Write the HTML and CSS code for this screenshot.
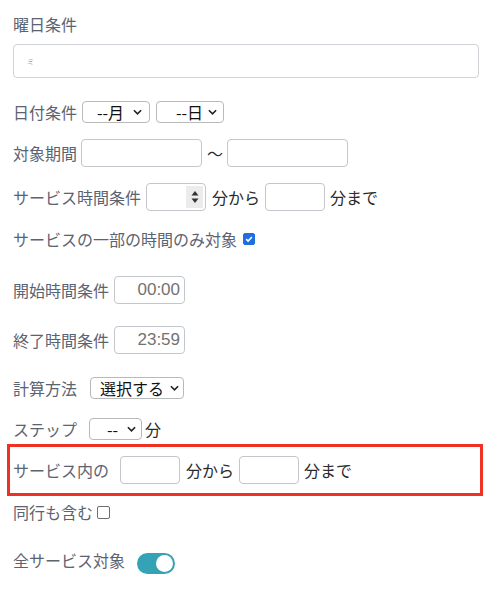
FILE: index.html
```html
<!DOCTYPE html>
<html lang="ja">
<head>
<meta charset="utf-8">
<title>条件</title>
<link rel="stylesheet" href="styles.css">
</head>
<body>
<form class="form">
  <div class="row label-row"><span class="lbl">曜日条件</span></div>
  <div class="wide-input"><span class="mini">ミ</span></div>

  <div class="row r-date">
    <span class="lbl">日付条件</span>
    <span class="sel s-month"><span class="sel-text">--月</span><svg class="chev" viewBox="0 0 10 6" width="9" height="6"><path d="M1 1l4 4 4-4" fill="none" stroke="#222" stroke-width="1.8"/></svg></span>
    <span class="sel s-day"><span class="sel-text">--日</span><svg class="chev" viewBox="0 0 10 6" width="9" height="6"><path d="M1 1l4 4 4-4" fill="none" stroke="#222" stroke-width="1.8"/></svg></span>
  </div>

  <div class="row r-period">
    <span class="lbl">対象期間</span>
    <span class="box w120 first"></span>
    <span class="txt tilde">〜</span>
    <span class="box w120"></span>
  </div>

  <div class="row r-svc">
    <span class="lbl">サービス時間条件</span>
    <span class="box num">
      <span class="spin"><svg viewBox="0 0 8 14" width="8" height="14"><path d="M4 1L7.5 5.5H0.5Z" fill="#333"/><path d="M4 13L7.5 8.5H0.5Z" fill="#333"/></svg></span>
    </span>
    <span class="txt">分から</span>
    <span class="box w60"></span>
    <span class="txt">分まで</span>
  </div>

  <div class="row r-part">
    <span class="lbl">サービスの一部の時間のみ対象</span>
    <span class="cb checked"><svg viewBox="0 0 12 12" width="12" height="12"><path d="M2.6 6.2l2.3 2.3 4.6-5" fill="none" stroke="#fff" stroke-width="1.9"/></svg></span>
  </div>

  <div class="row r-start">
    <span class="lbl">開始時間条件</span>
    <span class="box time">00:00</span>
  </div>

  <div class="row r-end">
    <span class="lbl">終了時間条件</span>
    <span class="box time">23:59</span>
  </div>

  <div class="row r-calc">
    <span class="lbl">計算方法</span>
    <span class="sel s-calc"><span class="sel-text">選択する</span><svg class="chev" viewBox="0 0 10 6" width="9" height="6"><path d="M1 1l4 4 4-4" fill="none" stroke="#222" stroke-width="1.8"/></svg></span>
  </div>

  <div class="row r-step">
    <span class="lbl">ステップ</span>
    <span class="sel s-step"><span class="sel-text">--</span><svg class="chev" viewBox="0 0 10 6" width="9" height="6"><path d="M1 1l4 4 4-4" fill="none" stroke="#222" stroke-width="1.8"/></svg></span>
    <span class="txt">分</span>
  </div>

  <div class="highlight">
    <span class="lbl">サービス内の</span>
    <span class="box w60 first"></span>
    <span class="txt">分から</span>
    <span class="box w60"></span>
    <span class="txt">分まで</span>
  </div>

  <div class="row r-accomp">
    <span class="lbl">同行も含む</span>
    <span class="cb"></span>
  </div>

  <div class="row r-all">
    <span class="lbl">全サービス対象</span>
    <span class="toggle"><span class="knob"></span></span>
  </div>
</form>
</body>
</html>
```

FILE: styles.css
```css
* { box-sizing: border-box; }
html, body { margin: 0; padding: 0; background: #fff; }
body {
  font-family: "Noto Sans CJK JP", "Noto Sans", sans-serif;
  font-size: 16px;
  color: #5c6370;
}
.form {
  padding: 12px 12px 0 13px;
  width: 491px;
}
.row {
  display: flex;
  align-items: center;
  height: 24px;
  white-space: nowrap;
}
.lbl { color: #5c6370; line-height: 24px; }
.txt { color: #2b2b2b; line-height: 24px; }

.wide-input {
  margin-top: 8px;
  height: 34px;
  border: 1px solid #cfd2d6;
  border-radius: 4px;
  display: flex;
  align-items: center;
  padding-left: 13px;
}
.mini {
  display: inline-block;
  font-size: 7px;
  color: #8a8a8a;
  line-height: 10px;
}

.r-date { margin-top: 22px; }
.sel {
  display: inline-flex;
  align-items: center;
  height: 22px;
  border: 1px solid #b9b9b9;
  border-radius: 4px;
  color: #111;
  font-size: 16px;
  background: #fff;
}
.sel-text { line-height: 20px; }
.chev { margin-left: auto; }
.s-month { width: 68px; margin-left: 5px; padding: 0 7px 0 14px; }
.s-day { width: 68px; margin-left: 6px; padding: 0 6px 0 19px; }

.box {
  display: inline-block;
  height: 28px;
  border: 1px solid #c3c6ca;
  border-radius: 4px;
  background: #fff;
}
.w120 { width: 121px; }
.w60 { width: 60px; }
.r-period { margin-top: 15px; height: 28px; }
.r-period .first { margin-left: 4px; }
.tilde { margin: 0 4px 0 5px; }

.r-svc { margin-top: 16px; height: 28px; }
.num {
  width: 60px;
  margin-left: 5px;
  margin-right: 6px;
  display: inline-flex;
  justify-content: flex-end;
  align-items: stretch;
  padding: 2px 2px 2px 0;
}
.spin {
  width: 17px;
  background: #ececec;
  display: flex;
  align-items: center;
  justify-content: center;
}
.r-svc .w60 { margin: 0 5px 0 5px; }

.r-part { margin-top: 16px; }
.cb {
  display: inline-flex;
  align-items: center;
  justify-content: center;
  width: 13px;
  height: 13px;
  border: 1px solid #6e6e6e;
  border-radius: 2px;
  margin-left: 4px;
  background: #fff;
}
.cb.checked {
  width: 12px;
  height: 12px;
  background: #1f6fe0;
  border-color: #1f6fe0;
  margin-left: 6px;
}

.r-start { margin-top: 25px; height: 28px; }
.r-end { margin-top: 22px; height: 28px; }
.time {
  width: 71px;
  margin-left: 5px;
  text-align: right;
  padding-right: 4px;
  font-family: "Liberation Sans", Arial, sans-serif;
  font-size: 17px;
  line-height: 26px;
  color: #727272;
}

.r-calc { margin-top: 22px; }
.s-calc { width: 94px; margin-left: 13px; padding: 0 4px 0 9px; }
.r-step { margin-top: 17px; }
.s-step { width: 53px; margin-left: 12px; padding: 0 5px 0 17px; }
.r-step .txt { margin-left: 3px; }

.highlight {
  margin: 3px -4px 0 -6px;
  height: 52px;
  border: 3px solid #ee3124;
  display: flex;
  align-items: center;
  padding-left: 3px;
  white-space: nowrap;
}
.highlight .first { margin-left: 11px; }
.highlight .txt { margin: 0 5px 0 6px; }
.highlight .txt:last-child { margin-left: 5px; }

.r-accomp { margin-top: 4px; }

.r-all { margin-top: 24px; align-items: flex-start; height: 26px; }
.toggle {
  margin-left: 12px;
  margin-top: 5px;
  width: 38px;
  height: 21px;
  border-radius: 11px;
  background: #34a3b5;
  display: inline-flex;
  align-items: center;
  justify-content: flex-end;
  padding-right: 2px;
}
.knob {
  width: 17px;
  height: 17px;
  border-radius: 50%;
  background: #fff;
}
```
